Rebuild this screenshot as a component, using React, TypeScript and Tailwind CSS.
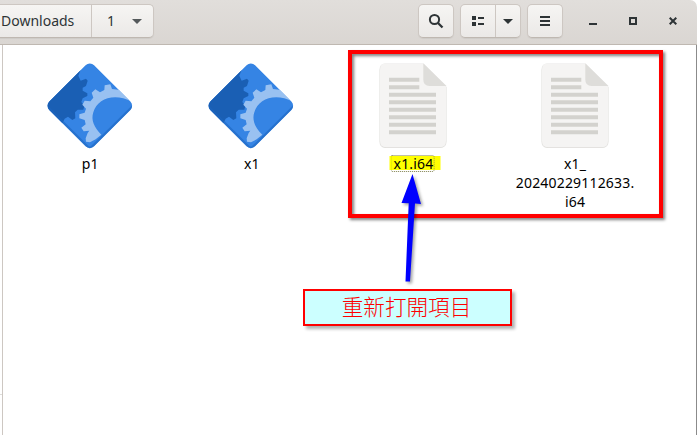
import React from "react";

const LABEL = "font-['Noto_Sans',sans-serif] text-[14px] leading-[19px]";
const BUTTON =
  "flex h-[34px] items-center border border-[#cdc7c2] border-b-[#bfb8b1] bg-gradient-to-b from-[#f6f5f3] to-[#ebe9e7] shadow-[0_1px_1px_rgba(0,0,0,0.06)]";

function Caret() {
  return (
    <svg width="10" height="5" viewBox="0 0 10 5">
      <path d="M0 0H10L5 5Z" fill="currentColor" />
    </svg>
  );
}

function ProgramIcon() {
  return (
    <svg width="86" height="86" viewBox="20 23 258 258">
      <defs>
        <clipPath id="diamond">
          <rect x="53.5" y="56.5" width="190" height="190" rx="18" transform="rotate(45 148.5 151.5)" />
        </clipPath>
      </defs>
      <g clipPath="url(#diamond)">
        <rect x="20" y="23" width="258" height="258" fill="#3584e4" />
        <path
          fill="#1a5fb4"
          d="M0 20H130L114 61L121 76L137 70L142 76L137 92L127 97L127 106L141 114L141 122L127 129L123 140L132 152L129 163L112 163L104 171L105 189L96 194L83 184L73 190L60 215H0Z"
        />
        <path
          fill="#99c1f1"
          d="M275 139L244 99L236 94L234 103L215 101L210 87L193 90L192 104L179 111L165 102L154 112L159 127L150 138L133 136L126 148L137 160L133 172L117 177L117 189L133 194L136 207L123 217L130 228L147 226L142 233L136 249L137 259L149 261L166 252L183 238C162 218 151 194 159 171C171 129 222 112 275 139Z"
        />
        <path d="M23 157L142 275Q148.500 281 155 275L276 155" fill="none" stroke="#1c65c0" strokeWidth="8" strokeOpacity=".6" />
      </g>
    </svg>
  );
}

function DocumentIcon() {
  return (
    <svg width="68" height="86" viewBox="0 0 68 86">
      <path d="M6.500 .5H44L67.500 24V78.500Q67.500 85 61 85H6.500Q.5 85 .5 78.500V7Q.5 .5 6.500 .5Z" fill="#deddda" />
      <path d="M6.500 .2H44L67 23.500V78Q67 84.200 61 84.200H7Q1 84.200 1 78V6.500Q1 .2 6.500 .2Z" fill="#f5f4f3" />
      <path d="M44.300 .2L67.500 23H50.500Q44.300 23 44.300 16.500Z" fill="#deddda" />
      <path
        d="M10 16.700H40.300M10 24.200H40.300M10 31.700H57M10 39.200H57M10 46.700H57M10 54.200H57M10 61.700H57M10 69.200H57"
        stroke="#d3d2ce"
        strokeWidth="3.900"
      />
    </svg>
  );
}

function FileItem({ icon, children }: { icon: React.ReactNode; children: React.ReactNode }) {
  return (
    <div className="flex w-[161.600px] shrink-0 flex-col items-center">
      <div className="h-[91px]">{icon}</div>
      <div className={`${LABEL} translate-x-[0.5px] text-center tracking-[0.18px] text-black`}>{children}</div>
    </div>
  );
}

export default function App() {
  return (
    <div className="relative flex h-[435px] w-[697px] flex-col overflow-hidden bg-white font-['Noto_Sans',sans-serif] text-[#2e3436]">
      <header className="flex h-[45px] shrink-0 items-start rounded-tr-[7px] border-b border-[#bfb8b1] bg-gradient-to-b from-[#e1dedb] to-[#dad6d2] pt-[4px]">
        <div className={`${BUTTON} w-[154px] rounded-r-[5px] border-l-0 text-[14px]`}>
          <span className="flex h-full w-[92px] items-center border-r border-[#cdc7c2] pb-[2px] pl-[1px]">
            <span>Downloads</span>
          </span>
          <span className="ml-[15px] w-[25px] pb-[2px]">1</span>
          <span className="text-[#54595b]"><Caret /></span>
        </div>
        <div className="ml-[264px] flex">
          <button className={`${BUTTON} w-[36px] justify-center rounded-[5px]`}>
            <svg width="16" height="16" viewBox="0 0 16 16" fill="none" stroke="#2e3436" strokeWidth="2">
              <circle cx="6.500" cy="6.500" r="4.600" />
              <path d="M10 10L14.500 14.500" strokeWidth="2.300" />
            </svg>
          </button>
          <div className={`${BUTTON} ml-[6px] w-[61px] rounded-[5px]`}>
            <span className="flex h-full w-[35px] items-center justify-center border-r border-[#cdc7c2]">
              <svg width="12" height="10" viewBox="0 0 12 10" fill="#2e3436">
                <path d="M0 0H4V4H0ZM0 6H4V10H0ZM6 1H12V3H6ZM6 7H12V9H6Z" />
              </svg>
            </span>
            <span className="flex flex-1 justify-center"><Caret /></span>
          </div>
          <button className={`${BUTTON} ml-[6px] w-[36px] justify-center rounded-[5px]`}>
            <svg width="10" height="10" viewBox="0 0 10 10" fill="#2e3436">
              <path d="M0 0H10V2H0ZM0 4H10V6H0ZM0 8H10V10H0Z" />
            </svg>
          </button>
        </div>
        <div className="ml-[26px] flex h-[34px] items-center gap-[32px] text-[#2e3436]">
          <svg width="8" height="8" viewBox="0 0 8 8"><path d="M0 6H8V8H0Z" fill="currentColor" /></svg>
          <svg width="8" height="8" viewBox="0 0 8 8"><path d="M1 1H7V7H1Z" fill="none" stroke="currentColor" strokeWidth="2" /></svg>
          <svg width="8" height="8" viewBox="0 0 8 8"><path d="M.7 .7L7.300 7.300M7.300 .7L.7 7.300" stroke="currentColor" strokeWidth="2" /></svg>
        </div>
      </header>
      <div className="flex min-h-0 flex-1">
        <aside className="w-[3px] border-r border-[#cdc7c2]">
          <div className="mt-[349px] h-px bg-[#deddda]" />
        </aside>
        <main className="flex flex-1 items-start border-r border-[#8b8b8b] pl-[6px] pt-[18px]">
          <FileItem icon={<ProgramIcon />}>p1</FileItem>
          <FileItem icon={<ProgramIcon />}>x1</FileItem>
          <FileItem icon={<DocumentIcon />}>
            <span className="relative">
              <span className="absolute left-[-4px] top-[2px] h-[14px] w-[51px] bg-[#ff0]" />
              <span className="absolute left-[-3px] top-[1px] h-[17px] w-[44px] rounded-[2px] border border-dotted border-[#80804d]" />
              <span className="relative">x1.i64</span>
            </span>
          </FileItem>
          <FileItem icon={<DocumentIcon />}>x1_<br />20240229112633.<br />i64</FileItem>
        </main>
      </div>
      <div className="absolute left-[348px] top-[50px] h-[168px] w-[315px] border-4 border-[#f00] [filter:drop-shadow(2px_2px_1.500px_rgba(0,0,0,0.5))]" />
      <svg className="absolute left-[390px] top-[170px] [filter:drop-shadow(2px_2px_1.500px_rgba(0,0,0,0.35))]" width="50" height="120" viewBox="0 0 50 120">
        <path d="M22.500 4L31 34L25 33.500L20 111.500H15.500L18.700 33.200L11.500 33Z" fill="#00f" />
      </svg>
      <div className="absolute left-[303px] top-[289px] flex h-[37px] w-[209px] items-center justify-center border-2 border-[#f00] bg-[#cff] shadow-[3px_3px_3px_rgba(0,0,0,0.3)]">
        <span className="relative left-[-1px] top-[-2px] font-['Noto_Sans_CJK_TC',sans-serif] text-[21.600px] font-light leading-none text-[#f00]">重新打開項目</span>
      </div>
    </div>
  );
}
